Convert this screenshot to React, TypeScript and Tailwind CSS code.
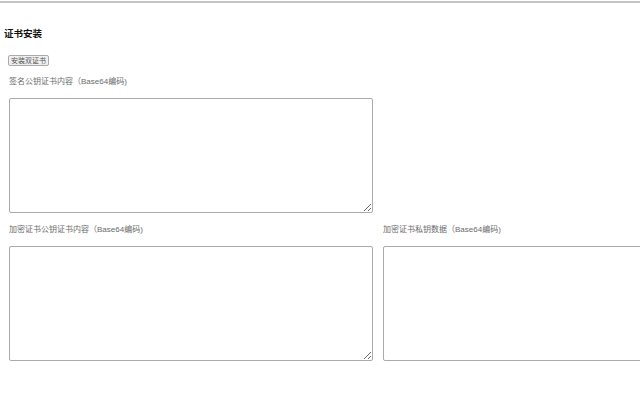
import React from "react";

const font = { fontFamily: '"Liberation Sans", "Noto Sans CJK SC", sans-serif' };

function Field({ label }: { label: string }) {
  return (
    <div className="flex flex-col w-[364px] shrink-0">
      <div className="h-[16px] leading-[16px] text-[8px] text-[#6a6a6a]">{label}</div>
      <textarea className="block mt-[8px] w-[364px] h-[115px] border border-[#ababab] rounded-[2px] bg-white resize-y outline-none" />
    </div>
  );
}

export default function App() {
  return (
    <div className="w-[640px] h-[400px] overflow-hidden bg-white relative leading-none" style={font}>
      <div className="mt-[1px] h-[2px] bg-[#c4c4c4]" />
      <div className="pl-[4px] mt-[25px] h-[12px] leading-[12px] text-[9.5px] font-bold text-[#111]">证书安装</div>
      <div className="pl-[8px] mt-[15px] flex h-[11px]">
        <button className="h-[11px] px-[2px] text-[7px] leading-[9px] text-[#555] bg-[#f0f0f0] border border-[#aaaaaa] rounded-[2px]">
          安装双证书
        </button>
      </div>
      <div className="pl-[9px] mt-[8px] flex">
        <Field label="签名公钥证书内容（Base64编码)" />
      </div>
      <div className="pl-[9px] mt-[9px] flex gap-[10px]">
        <Field label="加密证书公钥证书内容（Base64编码)" />
        <Field label="加密证书私钥数据（Base64编码)" />
      </div>
    </div>
  );
}
